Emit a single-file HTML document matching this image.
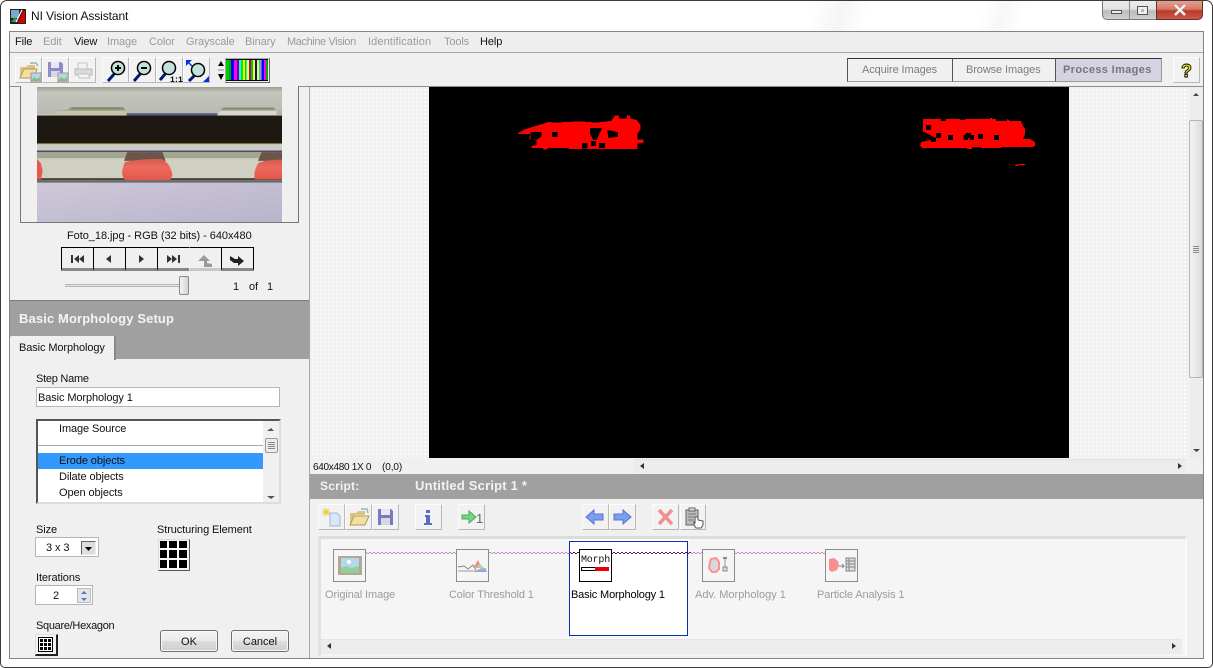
<!DOCTYPE html>
<html><head><meta charset="utf-8"><title>NI Vision Assistant</title>
<style>
html,body{margin:0;padding:0;background:#fff}
#w{position:relative;width:1213px;height:668px;overflow:hidden;background:#fff;font:11px "Liberation Sans",sans-serif;color:#111}
#w div,#w svg,#w span{position:absolute;box-sizing:border-box}
.t{white-space:nowrap;line-height:14px;height:14px;margin-top:1px;letter-spacing:-.1px}
.g{color:#9a9a9a}
.l{color:#9a9aa4}
.tb{width:27px;height:26px;background:#f2f2f2;border-right:1px solid #b8b8b8;border-bottom:1px solid #b8b8b8;border-top:1px solid #fcfcfc;border-left:1px solid #fcfcfc}
.tb svg{left:0;top:0}
.nb{top:247px;height:24px;width:33px;border:1px solid #000;background:#f0f0f0;border-bottom:3px solid #888;box-shadow:none}
.ic{width:33px;height:33px;border:1px solid #8c8c8c;background:#f5f5f5}
.btn{height:22px;top:630px;border:1px solid #707070;border-radius:3px;background:linear-gradient(#f3f3f3 0,#ebebeb 48%,#dcdcdc 52%,#cfcfcf 100%);text-align:center;line-height:22px;box-shadow:inset 0 0 0 1px #f8f8f8}
.box{background:#fff;border:1px solid #b5b5b5}
</style></head><body><div id="w">

<!-- window chrome -->
<div style="left:0;top:0;width:1213px;height:668px;border:1px solid #3a3a3a;border-radius:7px 7px 5px 5px;background:#fff"></div>
<div style="left:780px;top:1px;width:100px;height:30px;background:linear-gradient(105deg,#fff 30%,#f5f5f5 60%,#fff 85%)"></div>
<div style="left:960px;top:1px;width:70px;height:30px;background:linear-gradient(110deg,#fff 30%,#f7f7f7 60%,#fff 85%)"></div>
<svg style="left:10px;top:9px" width="16" height="15" viewBox="0 0 16 15"><rect width="16" height="15" fill="#222"/><rect x="1" y="1" width="8" height="8" fill="#7fa8c8"/><path d="M1 13L5 8l3 5z" fill="#3a9a3a"/><path d="M8 14L13 2h2v12z" fill="#d00"/><path d="M6 13L12 1" stroke="#fff" stroke-width="1.2"/></svg>
<span class="t" style="left:31px;top:8px;font-size:12px;color:#111">NI Vision Assistant</span>
<!-- caption buttons -->
<div style="left:1102px;top:1px;width:54px;height:19px;border:1px solid #777;border-top:0;border-right:0;border-radius:0 0 0 5px;background:linear-gradient(#ececec 0,#e2e2e2 45%,#bcbcbc 55%,#d0d0d0 100%)"></div>
<div style="left:1129px;top:1px;width:1px;height:18px;background:#8a8a8a"></div>
<div style="left:1111px;top:10px;width:11px;height:4px;background:#eee;border:1px solid #555"></div>
<div style="left:1137px;top:6px;width:11px;height:9px;background:#eee;border:1px solid #555"></div>
<div style="left:1141px;top:9px;width:3px;height:3px;background:#bbb;border:0"></div>
<div style="left:1156px;top:1px;width:47px;height:19px;border:1px solid #6a3030;border-top:0;border-radius:0 0 5px 0;background:linear-gradient(#e4a092 0,#d97868 45%,#b93a28 55%,#c85a48 100%)"></div>
<svg style="left:1173px;top:4px" width="14" height="12" viewBox="0 0 14 12"><path d="M2 1l10 10M12 1L2 11" stroke="#555" stroke-width="3.8" opacity=".25"/><path d="M2 1l10 10M12 1L2 11" stroke="#f0f0f0" stroke-width="2.6"/></svg>

<!-- main frame -->
<div style="left:9px;top:31px;width:1195px;height:628px;border:1px solid #848484;background:#f0f0f0"></div>

<!-- menu -->
<div style="left:10px;top:32px;width:1193px;height:21px;background:#eeeeee;border-bottom:1px solid #a8a8a8"></div>
<span class="t" style="left:15px;top:34px">File</span>
<span class="t g" style="left:43px;top:34px">Edit</span>
<span class="t" style="left:74px;top:34px">View</span>
<span class="t g" style="left:107px;top:34px">Image</span>
<span class="t g" style="left:149px;top:34px">Color</span>
<span class="t g" style="left:186px;top:34px">Grayscale</span>
<span class="t g" style="left:245px;top:34px">Binary</span>
<span class="t g" style="left:287px;top:34px;letter-spacing:-.4px">Machine Vision</span>
<span class="t g" style="left:368px;top:34px;letter-spacing:.1px">Identification</span>
<span class="t g" style="left:444px;top:34px">Tools</span>
<span class="t" style="left:480px;top:34px">Help</span>

<!-- toolbar -->
<div style="left:10px;top:53px;width:1193px;height:34px;background:#f0f0f0;border-bottom:1px solid #8e8e8e"></div>
<div class="tb" style="left:15px;top:57px"><svg width="26" height="25"><path d="M4 9h6l2-2h7v4H8L4 20z" fill="#dcc47c"/><path d="M4 20l4-9h13l-3 9z" fill="#f2e0a0" stroke="#b09a60"/><path d="M14 5h6l2 3" stroke="#8ab8c8" fill="none" stroke-width="1.5"/><rect x="15" y="15" width="10" height="9" fill="#b0d8e8" stroke="#b09090"/><path d="M15 23l3-4 3 2 3-2v4z" fill="#80c080"/></svg></div>
<div class="tb" style="left:42px;top:57px"><svg width="26" height="25"><path d="M5 4h13l2 2v13H5z" fill="#8c8cc8"/><rect x="8" y="4" width="8" height="6" fill="#e8e8f0"/><rect x="8" y="13" width="9" height="6" fill="#d8d8e0"/><rect x="15" y="15" width="10" height="9" fill="#b0d8e8" stroke="#b09090"/><path d="M15 23l3-4 3 2 3-2v4z" fill="#80c080"/></svg></div>
<div class="tb" style="left:69px;top:57px"><svg width="26" height="25"><path d="M8 5h9v6H8z" fill="#f2f2f2" stroke="#c4c4c4"/><path d="M5 11h17v6H5z" fill="#dadada" stroke="#bbb"/><path d="M8 16h10l2 4H9z" fill="#f4f4f4" stroke="#c4c4c4"/></svg></div>
<div class="tb" style="left:102px;top:57px"><svg width="26" height="25"><path d="M12 15l-7 8" stroke="#001a70" stroke-width="3"/><circle cx="15" cy="10" r="6.500" fill="#c4e2dc" stroke="#000" stroke-width="1.500"/><path d="M12 10h6M15 7v6" stroke="#000" stroke-width="2"/></svg></div>
<div class="tb" style="left:129px;top:57px"><svg width="26" height="25"><path d="M11 15l-7 8" stroke="#001a70" stroke-width="3"/><circle cx="14" cy="10" r="6.500" fill="#c4e2dc" stroke="#000" stroke-width="1.500"/><path d="M11 10h6" stroke="#000" stroke-width="2"/></svg></div>
<div class="tb" style="left:156px;top:57px"><svg width="26" height="25"><path d="M9 15l-6 7" stroke="#001a70" stroke-width="3"/><circle cx="12" cy="10" r="6.500" fill="#c4e2dc" stroke="#000" stroke-width="1.500"/><text x="13" y="24" font-family="Liberation Mono" font-size="8" font-weight="bold" letter-spacing="-.8">1:1</text></svg></div>
<div class="tb" style="left:183px;top:57px"><svg width="26" height="25"><path d="M11 17l-6 6" stroke="#001a70" stroke-width="3"/><circle cx="14" cy="12" r="6.500" fill="#c4e2dc" stroke="#000" stroke-width="1.500"/><path d="M2 2h6L2 8z" fill="#0030e0"/><path d="M5 5l3 3" stroke="#0030e0" stroke-width="1.500"/><path d="M25 24h-6l6-6z" fill="#0030e0"/></svg></div>
<svg style="left:217px;top:58px" width="8" height="24"><path d="M4 3l3 5H1z" fill="#000"/><path d="M1 12h6" stroke="#888"/><path d="M1 16h6l-3 6z" fill="#000"/></svg>
<div style="left:225px;top:58px;width:45px;height:25px;border:1px solid #aaa;border-right-color:#666;border-bottom-color:#666;background:#f0f0f0"></div>
<div style="left:226px;top:59px;width:42px;height:22px;border-top:1px solid #000;border-bottom:1px solid #000;background:linear-gradient(90deg,#0c0 0 3px,#0a0 3px 5px,#00f 5px 8px,#f0f 8px 11px,#808 11px 13px,#0ff 13px 15px,#0e0 15px 17px,#ff0 17px 19px,#0c0 19px 20px,#0ff 20px 21px,#ff0 21px 23px,#a0a 23px 25px,#0c0 25px 27px,#ff0 27px 29px,#00d 29px 31px,#ff0 31px 33px,#0dd 33px 35px,#f0f 35px 36px,#00f 36px 38px,#f0f 38px 40px,#0a0 40px 42px)"></div>

<!-- mode tabs -->
<div style="left:847px;top:58px;width:106px;height:24px;background:#f0f0f0;border-top:1px solid #333;border-left:1px solid #555;border-bottom:1px solid #999"></div>
<div style="left:952px;top:58px;width:104px;height:24px;background:#f0f0f0;border-top:1px solid #333;border-left:1px solid #555;border-bottom:1px solid #999"></div>
<div style="left:1055px;top:58px;width:107px;height:24px;background:#d3d3e2;border-top:1px solid #333;border-left:1px solid #555;border-bottom:1px solid #999;border-right:1px solid #999"></div>
<span class="t" style="left:862px;top:62px;color:#7c7c7c">Acquire Images</span>
<span class="t" style="left:966px;top:62px;color:#7c7c7c">Browse Images</span>
<span class="t" style="left:1063px;top:62px;color:#777;font-weight:bold;letter-spacing:.35px">Process Images</span>
<div class="tb" style="left:1173px;top:57px;width:27px;height:26px"><svg width="25" height="24"><text x="7" y="19" font-family="Liberation Sans" font-weight="bold" font-size="18" fill="#ff0" stroke="#000" stroke-width=".9">?</text></svg></div>

<!-- thumbnail -->
<div style="left:10px;top:87px;width:300px;height:214px;background:#f0f0f0"></div>
<div style="left:20px;top:86px;width:279px;height:137px;background:#f0f0f0;border:1px solid #777;border-top:0"></div>
<svg style="left:37px;top:87px" width="245" height="135" viewBox="81 6 735 406" preserveAspectRatio="none">
<defs><linearGradient id="lv" x1="0" y1="0" x2="1" y2="1"><stop offset="0" stop-color="#cfc8d8"/><stop offset="1" stop-color="#b8b4cc"/></linearGradient>
<linearGradient id="tp" x1="0" y1="0" x2="0" y2="1"><stop offset="0" stop-color="#9c9e94"/><stop offset=".2" stop-color="#c4c6bc"/><stop offset="1" stop-color="#b8bab4"/></linearGradient>
<linearGradient id="rd" x1="0" y1="0" x2="0" y2="1"><stop offset="0" stop-color="#d05a50"/><stop offset=".4" stop-color="#ee6a5c"/><stop offset="1" stop-color="#e0584c"/></linearGradient></defs>
<rect x="81" y="6" width="735" height="406" fill="#c0c2b8"/>
<rect x="81" y="6" width="735" height="80" fill="url(#tp)"/>
<path d="M130 90l10-13 30-2 10-8h160l10 22z" fill="#a8a898"/><path d="M180 74l5-7h155l5 7z" fill="#7c9068"/><path d="M140 78h205l8 12H130z" fill="#c8c4ac"/>
<path d="M622 90l8-18 10-5h155l5 10h16v13z" fill="#b4b4a4"/><path d="M635 74l5-6h150l5 6z" fill="#7c9068"/><path d="M630 78h170v12H622z" fill="#d8d8d0"/>
<rect x="350" y="85" width="272" height="7" fill="#50587c"/>
<rect x="81" y="92" width="735" height="83" fill="#1d1812"/>
<rect x="81" y="175" width="735" height="3" fill="#7c6a30"/>
<rect x="81" y="178" width="735" height="20" fill="#cdcdc4"/>
<rect x="81" y="197" width="735" height="5" fill="#4a4a78"/>
<rect x="81" y="202" width="735" height="20" fill="#a4a690"/>
<rect x="81" y="220" width="735" height="62" fill="#cfcfc2"/>
<rect x="81" y="280" width="735" height="6" fill="#4c4434"/>
<rect x="81" y="286" width="735" height="8" fill="#6c6c70"/>
<rect x="81" y="294" width="735" height="118" fill="url(#lv)"/>
<path d="M352 202h105l10 26H342z" fill="#6c5448"/>
<path d="M345 232Q380 222 455 222Q485 240 487 272L480 286H345Q328 268 345 232z" fill="url(#rd)"/>
<path d="M755 202h61v26h-72z" fill="#6c5448"/>
<path d="M745 235Q770 224 816 224V284H735Q728 262 745 235z" fill="url(#rd)"/>
<path d="M81 222l12 14 5 22-5 26H81z" fill="#e8594c"/>
</svg>
<span class="t" style="left:67px;top:228px;letter-spacing:-.05px">Foto_18.jpg - RGB (32 bits) - 640x480</span>

<!-- nav buttons -->
<div class="nb" style="left:61px"></div><div class="nb" style="left:93px"></div><div class="nb" style="left:125px"></div><div class="nb" style="left:157px"></div>
<div class="nb" style="left:189px;border-color:#f0f0f0;border-top:1px solid #000;border-bottom:3px solid #c8c8c8"></div><div class="nb" style="left:221px"></div>
<svg style="left:61px;top:247px" width="193" height="24"><g fill="#333"><path d="M10 8h2v8h-2zM13 12l5-4v8zM18 12l5-4v8z"/><path d="M45 12l5-4v8z"/><path d="M78 8l5 4-5 4z"/><path d="M106 8l5 4-5 4zM111 8l5 4-5 4zM117 8h2v8h-2z"/></g>
<path d="M137 14l6-6 6 6h-3v2l5 1v3h-8v-6z" fill="#9a9a9a"/><path d="M169 9l5 3h3v-3l6 5-6 5v-3h-4l-4-3z" fill="#222"/></svg>

<!-- slider -->
<div style="left:65px;top:284px;width:116px;height:3px;background:#e8e8e8;border:1px solid #b4b4b4;border-left-color:#ccc"></div>
<div style="left:179px;top:276px;width:10px;height:19px;border:1px solid #8a8a8a;border-radius:2px;background:linear-gradient(90deg,#f4f4f4,#d4d4d4)"></div>
<span class="t" style="left:233px;top:279px">1</span>
<span class="t" style="left:249px;top:279px">of</span>
<span class="t" style="left:267px;top:279px">1</span>

<!-- setup panel -->
<div style="left:10px;top:300px;width:300px;height:1px;background:#7e7e7e"></div>
<div style="left:10px;top:301px;width:300px;height:58px;background:#a0a0a0"></div>
<span class="t" style="left:19px;top:311px;color:#f4f4f4;font-weight:bold;font-size:13px;letter-spacing:.12px">Basic Morphology Setup</span>
<div style="left:10px;top:336px;width:106px;height:25px;background:#f0f0f0;border-right:2px solid #888;border-radius:2px 2px 0 0"></div>
<span class="t" style="left:19px;top:340px">Basic Morphology</span>
<div style="left:10px;top:360px;width:300px;height:298px;background:#f0f0f0"></div>
<div style="left:309px;top:87px;width:1px;height:571px;background:#a6a6a6"></div>

<span class="t" style="left:36px;top:371px;letter-spacing:-.25px">Step Name</span>
<div class="box" style="left:36px;top:387px;width:244px;height:20px"></div>
<span class="t" style="left:38px;top:390px">Basic Morphology 1</span>

<div style="left:36px;top:419px;width:245px;height:85px;background:#fff;border:2px solid #555;border-right:2px solid #ddd;border-bottom:2px solid #ddd"></div>
<span class="t" style="left:59px;top:421px">Image Source</span>
<div style="left:38px;top:445px;width:225px;height:1px;background:#aaa"></div>
<div style="left:38px;top:453px;width:225px;height:16px;background:#3399ff"></div>
<span class="t" style="left:59px;top:453px">Erode objects</span>
<span class="t" style="left:59px;top:469px">Dilate objects</span>
<span class="t" style="left:59px;top:485px">Open objects</span>
<div style="left:263px;top:421px;width:16px;height:81px;background:#f0f0f0"></div>
<svg style="left:264px;top:424px" width="15" height="76"><path d="M7 4l3 3H3zM3 72h8l-4 3z" fill="#555"/></svg>
<div style="left:265px;top:438px;width:13px;height:15px;border:1px solid #999;border-radius:2px;background:#ececec"></div>
<div style="left:268px;top:442px;width:7px;height:7px;background:repeating-linear-gradient(#888 0 1px,transparent 1px 2px)"></div>

<span class="t" style="left:36px;top:522px">Size</span>
<div class="box" style="left:35px;top:537px;width:64px;height:20px"></div>
<span class="t" style="left:46px;top:540px">3 x 3</span>
<div style="left:81px;top:541px;width:15px;height:14px;border:1px solid;border-color:#666 #eee #eee #666;background:#ddd"></div>
<svg style="left:84px;top:547px" width="10" height="5"><path d="M1 0h7L4.500 4z" fill="#000"/></svg>
<span class="t" style="left:157px;top:522px">Structuring Element</span>
<div style="left:158px;top:539px;width:32px;height:32px;background:#f4f4f4;border-right:1px solid #555;border-bottom:1px solid #555;border-left:1px solid #ddd;border-top:1px solid #ddd"></div>
<svg style="left:160px;top:541px" width="27" height="27"><path d="M0 0h27v27H0z" fill="#000"/><path d="M7 0h2v27H7zM17 0h2v27h-2zM0 7h27v2H0zM0 17h27v2H0z" fill="#fff"/></svg>
<span class="t" style="left:36px;top:570px">Iterations</span>
<div class="box" style="left:35px;top:585px;width:58px;height:20px"></div>
<span class="t" style="left:53px;top:588px">2</span>
<div style="left:77px;top:588px;width:14px;height:15px;background:#e4e4ea;border:1px solid #bbb"></div>
<svg style="left:77px;top:588px" width="14" height="15"><path d="M7 3l3 3H4zM4 10h6l-3 3z" fill="#5878b8"/></svg>
<span class="t" style="left:36px;top:618px;letter-spacing:-.3px">Square/Hexagon</span>
<div style="left:35px;top:634px;width:23px;height:22px;background:#f4f4f4;border-right:2px solid #222;border-bottom:2px solid #222;border-top:1px solid #ddd;border-left:1px solid #ddd"></div>
<svg style="left:38px;top:637px" width="15" height="15"><rect x=".5" y=".5" width="14" height="14" fill="#fff" stroke="#000"/><path d="M2 2h3v3H2zM6 2h3v3H6zM10 2h3v3h-3zM2 6h3v3H2zM6 6h3v3H6zM10 6h3v3h-3zM2 10h3v3H2zM6 10h3v3H6zM10 10h3v3h-3z" fill="#000"/></svg>
<div class="btn" style="left:160px;width:58px">OK</div>
<div class="btn" style="left:231px;width:58px">Cancel</div>

<!-- image view -->
<div style="left:310px;top:87px;width:879px;height:371px;background-color:#fbfbfb;background-image:linear-gradient(90deg,#f0f0f0 50%,transparent 50%),linear-gradient(#f0f0f0 50%,transparent 50%);background-size:4px 4px"></div>
<div style="left:429px;top:87px;width:640px;height:371px;background:#000"></div>
<svg style="left:500px;top:100px" width="160" height="70" viewBox="0 0 480 210" shape-rendering="crispEdges">
<path fill="#f00" d="M54 100L70 90L105 78L135 70L145 66L165 68L240 64L290 68L335 62L345 46H357V55H380L382 46H390V55L410 60L422 75V88L413 100V118H430V128L413 130V147H208L205 144H145L140 148H130L128 144H94V138L110 135V120L88 118L90 102H54Z"/>
<path fill="#000" d="M92 96H124V110L112 118H92ZM156 96H172V111H156ZM270 84H306L290 120H280L270 100ZM322 90L354 96V110L325 114ZM246 129H262V145H246ZM273 123H288V138H273ZM297 129H315V144H297Z"/>
</svg>
<svg style="left:900px;top:100px" width="160" height="80" viewBox="0 0 480 240" shape-rendering="crispEdges">
<path fill="#f00" d="M69 57H123V63H138V57H180V60H195V57H270V54H276V57H288V63H321V57L330 63H363L369 78L375 87V102L369 117H390L405 126V138L396 141H303V144H243L240 141H216V147H201V144H66L60 138L63 126L90 120H108V114L90 105L72 96H69Z"/>
<path fill="#000" d="M78 75H93V90H78ZM108 99H123V114H108ZM144 105H159V120H144ZM190 105H196V99H213V105H222V120H208V114H204V120H190ZM234 102H249V117H234ZM282 105H297V120H282ZM93 114H108V126H93ZM70 108H88V122H70Z"/>
<path fill="#f00" d="M351 192H375V195H354V198H345V195H351ZM327 192H330V195H327Z"/>
</svg>

<!-- vertical scrollbar -->
<div style="left:1189px;top:87px;width:14px;height:372px;background:#ededed"></div>
<svg style="left:1189px;top:87px" width="14" height="372"><path d="M7 6l3 3H4zM4 362h7l-3.500 3z" fill="#444"/></svg>
<div style="left:1189px;top:120px;width:14px;height:258px;border:1px solid #b4b4b4;border-radius:2px;background:linear-gradient(90deg,#f4f4f4,#dcdcdc)"></div>
<div style="left:1193px;top:246px;width:6px;height:7px;background:repeating-linear-gradient(#888 0 1px,transparent 1px 2px)"></div>

<!-- status -->
<div style="left:310px;top:458px;width:893px;height:16px;background:#f0f0f0"></div>
<span class="t" style="left:313px;top:460px;font-size:10px;letter-spacing:-.3px">640x480 1X 0</span>
<span class="t" style="left:382px;top:460px;font-size:10px">(0,0)</span>
<div style="left:634px;top:459px;width:552px;height:14px;background:#ececec;border-top:1px solid #e2e2e2"></div>
<svg style="left:638px;top:462px" width="8" height="8"><path d="M6 1v6L2 4z" fill="#333"/></svg>
<svg style="left:1176px;top:462px" width="8" height="8"><path d="M2 1v6l4-3z" fill="#333"/></svg>

<!-- script bar -->
<div style="left:310px;top:474px;width:893px;height:25px;background:#a0a0a0"></div>
<span class="t" style="left:320px;top:478px;color:#f2f2f2;font-weight:bold;font-size:12px;letter-spacing:.2px">Script:</span>
<span class="t" style="left:415px;top:478px;color:#f2f2f2;font-weight:bold;font-size:13px;letter-spacing:.2px">Untitled Script 1 *</span>

<!-- script toolbar -->
<div class="tb" style="left:318px;top:504px"><svg width="25" height="24"><path d="M11 8h7l3 3v10H11z" fill="#d8e8f8" stroke="#a0b8d0"/><path d="M7 3v8M3 7h8M4 4l6 6M10 4l-6 6" stroke="#e8d040" stroke-width="1.200"/></svg></div>
<div class="tb" style="left:345px;top:504px"><svg width="25" height="24"><path d="M4 8h6l2-2h7v4H8L4 19z" fill="#dcc47c"/><path d="M4 20l4-9h15l-4 9z" fill="#f2e0a0" stroke="#b09a60"/><path d="M15 4h6l1 4" stroke="#8ab8c8" fill="none" stroke-width="1.500"/></svg></div>
<div class="tb" style="left:372px;top:504px"><svg width="25" height="24"><path d="M5 4h13l2 2v14H5z" fill="#7878c4"/><rect x="8" y="4" width="9" height="6" fill="#e8e8f0"/><rect x="8" y="13" width="9" height="7" fill="#d8d8e0"/></svg></div>
<div class="tb" style="left:415px;top:504px"><svg width="25" height="24"><path d="M10 5h4v3h-4zM9 10h5v8h2v2H8v-2h2v-6H9z" fill="#5a6ac8"/></svg></div>
<div class="tb" style="left:458px;top:504px"><svg width="25" height="24"><path d="M3 10h7V6l7 6-7 6v-4H3z" fill="#70d880" stroke="#50a860"/><text x="17" y="18" font-family="Liberation Sans" font-size="13" fill="#666">1</text></svg></div>
<div class="tb" style="left:582px;top:504px"><svg width="25" height="24"><path d="M20 9h-9V5l-8 7 8 7v-4h9z" fill="#78a0f0" stroke="#6070d0"/></svg></div>
<div class="tb" style="left:609px;top:504px"><svg width="25" height="24"><path d="M4 9h9V5l8 7-8 7v-4H4z" fill="#78a0f0" stroke="#6070d0"/></svg></div>
<div class="tb" style="left:652px;top:504px"><svg width="25" height="24"><path d="M6 5l13 14M19 5L6 19" stroke="#f09090" stroke-width="3.500"/></svg></div>
<div class="tb" style="left:680px;top:504px;width:26px"><svg width="24" height="24"><path d="M5 5h12v15H5z" fill="#bbb" stroke="#666"/><path d="M8 3h6v3H8z" fill="#ddd" stroke="#666"/><path d="M7 9h8M7 12h6M7 15h5" stroke="#777"/><path d="M14 12v6l-1-1v3l2 3h5l2-3v-4l-5-1v-3z" fill="#fff" stroke="#555"/></svg></div>

<!-- script strip -->
<div style="left:318px;top:536px;width:869px;height:120px;background:#f5f5f5;border-top:3px solid #dcdcdc;border-left:3px solid #e2e2e2;border-right:2px solid #fafafa"></div>
<div style="left:569px;top:539px;width:120px;height:3px;background:#fff"></div>
<div style="left:569px;top:541px;width:119px;height:95px;background:#fff;border:1px solid #0a30b0"></div>
<svg style="left:365px;top:552px" width="460" height="2" shape-rendering="crispEdges"><defs>
<pattern id="wa" width="4" height="2" patternUnits="userSpaceOnUse"><rect width="2" height="1" fill="#b48cbc"/><rect x="2" y="1" width="2" height="1" fill="#b48cbc"/></pattern>
<pattern id="wb" width="4" height="2" patternUnits="userSpaceOnUse"><rect width="2" height="1" fill="#581070"/><rect x="2" y="1" width="2" height="1" fill="#581070"/></pattern></defs>
<rect width="460" height="2" fill="url(#wa)"/><rect x="204" width="122" height="2" fill="url(#wb)"/></svg>
<div class="ic" style="left:333px;top:549px"><svg width="31" height="31"><rect x="4" y="6" width="24" height="19" fill="#b4a890"/><rect x="7" y="8" width="18" height="15" fill="#b4d8ec"/><path d="M7 23v-5l5-2 5 2 8-2v7z" fill="#90d0a0"/><circle cx="15" cy="12" r="2" fill="#fff"/></svg></div>
<div class="ic" style="left:456px;top:549px"><svg width="31" height="31"><path d="M1 17l6-1 4 3 5-4 3 5" fill="none" stroke="#888"/><path d="M16 18l5-8 4 8z" fill="#f09090"/><path d="M19 18l4-4 4 4z" fill="#a0e090"/><path d="M24 18h5v4h-12z" fill="#b0b0e8"/><path d="M1 21h29" stroke="#999"/></svg></div>
<div class="ic" style="left:579px;top:549px;border-color:#000;background:#fff"><span class="t" style="left:1px;top:3px;font:10px/14px 'Liberation Mono',monospace;letter-spacing:-.2px">Morph</span><svg style="left:1px;top:17px" width="29" height="6"><rect x=".5" y=".5" width="27" height="3" fill="#fff" stroke="#000"/><rect x="14" y="0" width="14" height="4" fill="#e00"/></svg></div>
<div class="ic" style="left:702px;top:549px"><svg width="31" height="31"><path d="M8 9l5-1 3 4v7l-3 3h-4l-3-4 1-6z" fill="#d8d8d8" stroke="#f88" stroke-width="1.800"/><path d="M22 9v10" stroke="#a08878"/><path d="M20 8h4" stroke="#888" stroke-width="2"/><rect x="20" y="17" width="4" height="4" fill="#ddd" stroke="#888"/></svg></div>
<div class="ic" style="left:825px;top:549px"><svg width="31" height="31"><path d="M3 9l5-1 4 3 1 5-2 4-5 2-3-2z" fill="#f88f8f"/><path d="M13 16h5m-2-2l2 2-2 2" stroke="#888" fill="none"/><rect x="20" y="8" width="9" height="13" fill="#ddd" stroke="#888"/><path d="M20 11h9M20 14h9M20 17h9M23 8v13" stroke="#888"/></svg></div>
<span class="t l" style="left:325px;top:587px">Original Image</span>
<span class="t l" style="left:449px;top:587px;letter-spacing:-.15px">Color Threshold 1</span>
<span class="t" style="left:571px;top:587px;color:#000;letter-spacing:-.15px">Basic Morphology 1</span>
<span class="t l" style="left:695px;top:587px;letter-spacing:0">Adv. Morphology 1</span>
<span class="t l" style="left:817px;top:587px">Particle Analysis 1</span>
<div style="left:321px;top:639px;width:861px;height:15px;background:#ececec;border-top:1px solid #e4e4e4"></div>
<svg style="left:325px;top:642px" width="8" height="8"><path d="M6 1v6L2 4z" fill="#333"/></svg>
<svg style="left:1170px;top:642px" width="8" height="8"><path d="M2 1v6l4-3z" fill="#333"/></svg>

</div></body></html>
